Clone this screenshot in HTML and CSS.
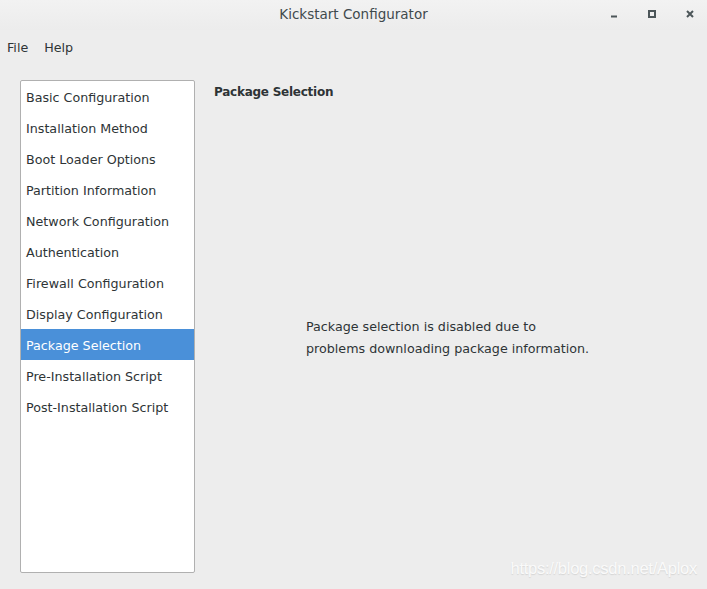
FILE: index.html
```html
<!DOCTYPE html>
<html>
<head>
<meta charset="utf-8">
<link rel="stylesheet" href="styles.css">
</head>
<body>
<div class="window">
  <div class="titlebar">
    <div class="title">Kickstart Configurator</div>
    <div class="controls">
      <svg class="ctl" width="8" height="8" viewBox="0 0 8 8"><rect x="1" y="5.5" width="6" height="2" fill="#4c5659"/></svg>
      <svg class="ctl" width="8" height="8" viewBox="0 0 8 8"><rect x="1" y="1" width="6" height="6" fill="none" stroke="#4c5659" stroke-width="2"/></svg>
      <svg class="ctl" width="8" height="8" viewBox="0 0 8 8"><path d="M1 1 L7 7 M7 1 L1 7" stroke="#4c5659" stroke-width="2"/></svg>
    </div>
  </div>
  <div class="menubar">
    <span class="menu">File</span>
    <span class="menu">Help</span>
  </div>
  <div class="main">
    <ul class="sidebar">
      <li>Basic Configuration</li>
      <li>Installation Method</li>
      <li>Boot Loader Options</li>
      <li>Partition Information</li>
      <li>Network Configuration</li>
      <li>Authentication</li>
      <li>Firewall Configuration</li>
      <li>Display Configuration</li>
      <li class="selected">Package Selection</li>
      <li>Pre-Installation Script</li>
      <li>Post-Installation Script</li>
    </ul>
    <div class="content">
      <div class="heading">Package Selection</div>
      <div class="message">Package selection is disabled due to<br>problems downloading package information.</div>
    </div>
  </div>
  <div class="watermark">https://blog.csdn.net/Aplox</div>
</div>
</body>
</html>
```
FILE: styles.css
```css
html, body {
  margin: 0;
  padding: 0;
  background: #ededed;
}
.window {
  width: 707px;
  height: 589px;
  position: relative;
  overflow: hidden;
  font-family: "DejaVu Sans", sans-serif;
  font-size: 12.7px;
  color: #2e3436;
  background: #ededed;
}
.titlebar {
  height: 30px;
  background: linear-gradient(#f2f2f2, #ececec);
  display: flex;
  align-items: center;
  justify-content: center;
  position: relative;
}
.title {
  font-size: 13.5px;
  color: #3f4a4d;
  margin-top: -2px;
}
.controls {
  position: absolute;
  top: 10px;
  right: 13px;
  display: flex;
  gap: 30px;
}
.ctl {
  display: block;
}
.menubar {
  height: 34px;
  display: flex;
  align-items: center;
  padding-left: 7px;
  gap: 16px;
}
.main {
  display: flex;
  padding-left: 20px;
  padding-top: 16px;
}
.sidebar {
  list-style: none;
  margin: 0;
  padding: 0;
  width: 173px;
  height: 491px;
  background: #fff;
  border: 1px solid #b0b0b0;
  border-radius: 2px;
}
.sidebar li {
  height: 31px;
  line-height: 33px;
  padding-left: 5px;
  white-space: nowrap;
}
.sidebar li.selected {
  background: #4a90d9;
  color: #fff;
}
.content {
  flex: 1;
  padding-left: 19px;
  position: relative;
}
.heading {
  font-weight: bold;
  font-size: 12px;
  letter-spacing: -0.25px;
  margin-top: 3px;
  line-height: 18px;
}
.message {
  margin-top: 215px;
  margin-left: 92px;
  line-height: 22px;
}
.watermark {
  position: absolute;
  right: 10px;
  top: 559px;
  font-family: "Liberation Sans", sans-serif;
  font-size: 16.6px;
  color: #fafafa;
  text-shadow: 0 1px 1px #d4d4d4;
  letter-spacing: -0.3px;
}
```
